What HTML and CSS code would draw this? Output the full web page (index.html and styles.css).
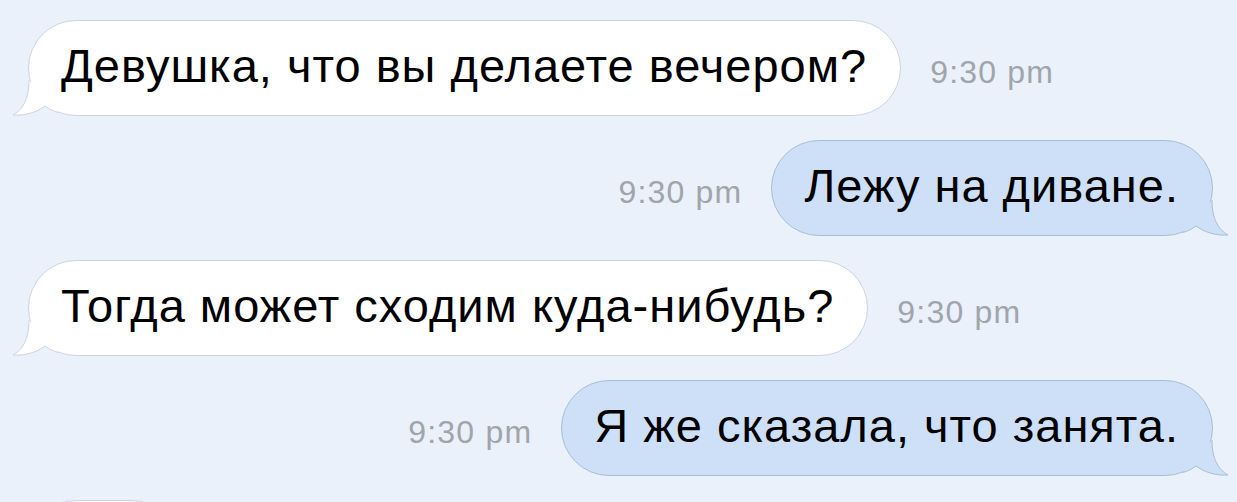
FILE: index.html
```html
<!DOCTYPE html>
<html lang="ru">

<head>
    <meta charset="UTF-8">
    <meta name="viewport" content="width=device-width, initial-scale=1.0">
    <title>Сообщения</title>
    <link rel="stylesheet" href="styles.css">
</head>

<body>
    <div class="chat">
        <div class="row in">
            <div class="bubble">
                <span class="text">Девушка, что вы делаете вечером?</span>
                <svg class="tail" viewBox="0 0 100 98" width="100" height="98">
                    <path class="tail-fill" d="M21 60 C21 80 14 90 5 95 C17 96 29 92 37 86 C41 89 45 91 50 92.5 L40 80 Z" />
                    <path class="tail-line" d="M21 60 C21 80 14 90 5 95 C17 96 29 92 37 86 C41 89 45 91 50 92.5" />
                </svg>
            </div>
            <span class="time">9:30 pm</span>
        </div>

        <div class="row out">
            <span class="time">9:30 pm</span>
            <div class="bubble">
                <span class="text">Лежу на диване.</span>
                <svg class="tail" viewBox="0 0 100 98" width="100" height="98">
                    <path class="tail-fill" d="M21 60 C21 80 14 90 5 95 C17 96 29 92 37 86 C41 89 45 91 50 92.5 L40 80 Z" />
                    <path class="tail-line" d="M21 60 C21 80 14 90 5 95 C17 96 29 92 37 86 C41 89 45 91 50 92.5" />
                </svg>
            </div>
        </div>

        <div class="row in">
            <div class="bubble">
                <span class="text">Тогда может сходим куда-нибудь?</span>
                <svg class="tail" viewBox="0 0 100 98" width="100" height="98">
                    <path class="tail-fill" d="M21 60 C21 80 14 90 5 95 C17 96 29 92 37 86 C41 89 45 91 50 92.5 L40 80 Z" />
                    <path class="tail-line" d="M21 60 C21 80 14 90 5 95 C17 96 29 92 37 86 C41 89 45 91 50 92.5" />
                </svg>
            </div>
            <span class="time">9:30 pm</span>
        </div>

        <div class="row out">
            <span class="time">9:30 pm</span>
            <div class="bubble">
                <span class="text">Я же сказала, что занята.</span>
                <svg class="tail" viewBox="0 0 100 98" width="100" height="98">
                    <path class="tail-fill" d="M21 60 C21 80 14 90 5 95 C17 96 29 92 37 86 C41 89 45 91 50 92.5 L40 80 Z" />
                    <path class="tail-line" d="M21 60 C21 80 14 90 5 95 C17 96 29 92 37 86 C41 89 45 91 50 92.5" />
                </svg>
            </div>
        </div>

        <!-- next message, only its top edge is on screen -->
        <div class="row in">
            <div class="bubble stub"></div>
        </div>
    </div>
</body>

</html>
```

FILE: styles.css
```css
html,
body {
    margin: 0;
    padding: 0;
    background: #eaf1fa;
    overflow: hidden;
}

body {
    font-family: "Liberation Sans", Arial, sans-serif;
}

.chat {
    display: flex;
    flex-direction: column;
    gap: 24px;
    padding: 20px 24px 0 28px;
}

.row {
    display: flex;
    align-items: center;
    gap: 29px;
}

.row.out {
    justify-content: flex-end;
}

.bubble {
    position: relative;
    box-sizing: border-box;
    height: 96px;
    display: flex;
    align-items: center;
    padding: 0 33px 6px 32px;
    border-radius: 48px;
    font-size: 47px;
    letter-spacing: 1px;
    color: #000;
    white-space: nowrap;
}

.text {
    position: relative;
    z-index: 1;
}

.in .bubble {
    background: #fff;
    border: 1px solid #cdd4de;
}

.out .bubble {
    background: #cde0f8;
    border: 1px solid #aabdd7;
}

.bubble.stub {
    width: 151px;
}

.tail {
    position: absolute;
    top: -1px;
    overflow: visible;
}

.in .tail {
    left: -21px;
}

.out .tail {
    right: -21px;
    transform: scaleX(-1);
}

.tail-line {
    fill: none;
    stroke-width: 1;
}

.in .tail-fill {
    fill: #fff;
}

.in .tail-line {
    stroke: #cdd4de;
}

.out .tail-fill {
    fill: #cde0f8;
}

.out .tail-line {
    stroke: #aabdd7;
}

.time {
    padding-top: 9px;
    font-size: 32px;
    letter-spacing: 1.2px;
    color: #a0a4ab;
}
```
